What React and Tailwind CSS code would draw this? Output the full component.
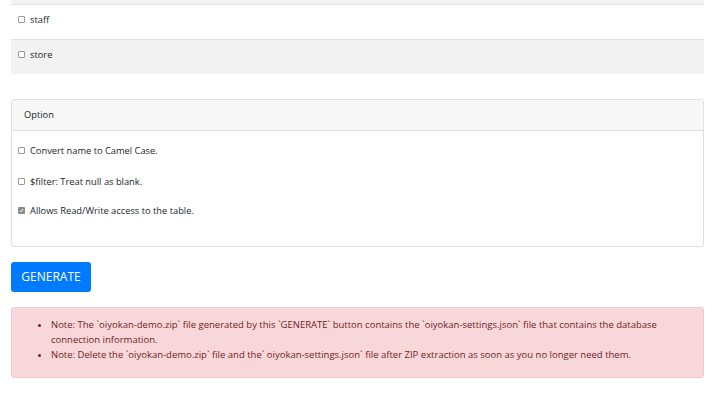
import React from "react";

function Box({ checked }) {
  return checked ? (
    <span className="inline-flex h-[7px] w-[7px] items-center justify-center rounded-[1px] bg-[#8a8a8a]">
      <svg width="5" height="5" viewBox="0 0 5 5"><path d="M0.8 2.6 L2 3.8 L4.2 1" stroke="#fff" strokeWidth="1" fill="none" /></svg>
    </span>
  ) : (
    <span className="inline-block h-[7px] w-[7px] rounded-[1px] border border-[#9a9a9a] bg-white" />
  );
}

function Check({ label, checked }) {
  return (
    <div className="flex items-center gap-[5px]">
      <Box checked={checked} />
      <span>{label}</span>
    </div>
  );
}

export default function App() {
  return (
    <div className="w-[715px] h-[393px] bg-white px-[11px] text-[9.3px] text-[#212529]" style={{ fontFamily: '"Open Sans", sans-serif' }}>
      <div className="w-[693px]">
        <div className="h-[4px] bg-[#f2f2f2]" />
        <div className="h-[35px] border-t border-[#dee2e6] px-[7px] pt-[7px]">
          <div className="h-[15px] flex items-center"><Check label="staff" /></div>
        </div>
        <div className="h-[35px] border-t border-[#dee2e6] bg-[#f2f2f2] px-[7px] pt-[7px]">
          <div className="h-[15px] flex items-center"><Check label="store" /></div>
        </div>
        <div className="mt-[25px] border border-[#dfdfdf] rounded-[3px]">
          <div className="h-[31px] bg-[#f7f7f7] border-b border-[#dfdfdf] flex items-center px-[12px]">Option</div>
          <div className="h-[115px] pt-[12px] px-[6px] flex flex-col">
            <div className="h-[15px] flex items-center"><Check label="Convert name to Camel Case." /></div>
            <div className="mt-[16px] h-[15px] flex items-center"><Check label="$filter: Treat null as blank." /></div>
            <div className="mt-[14px] h-[15px] flex items-center"><Check label="Allows Read/Write access to the table." checked /></div>
          </div>
        </div>
        <button className="mt-[15px] h-[30px] w-[80px] rounded-[3px] bg-[#007bff] text-white text-[12px] flex items-center justify-center">GENERATE</button>
        <div className="mt-[15px] h-[71px] rounded-[3px] border border-[#f5c6cb] bg-[#f8d7da] text-[#721c24] text-[9.5px] pt-[9px] pl-[39px] pr-[20px] leading-[15px]">
          <ul className="list-disc">
            <li>Note: The `oiyokan-demo.zip` file generated by this `GENERATE` button contains the `oiyokan-settings.json` file that contains the database connection information.</li>
            <li>Note: Delete the `oiyokan-demo.zip` file and the` oiyokan-settings.json` file after ZIP extraction as soon as you no longer need them.</li>
          </ul>
        </div>
      </div>
    </div>
  );
}
